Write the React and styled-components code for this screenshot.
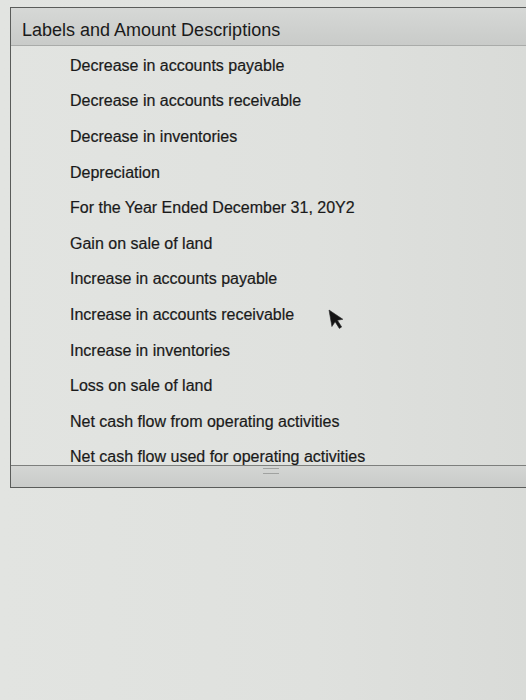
import React from "react";
import styled, { createGlobalStyle } from "styled-components";

const GlobalStyle = createGlobalStyle`
  html, body {
    margin: 0;
    padding: 0;
    background: #dfe1de;
    overflow: hidden;
  }
  body {
    font-family: "Liberation Sans", Arial, sans-serif;
    color: #1a1a1a;
  }
`;

const Page = styled.div`
  position: relative;
  width: 526px;
  height: 700px;
  padding-top: 7px;
  box-sizing: border-box;
  background: linear-gradient(90deg, #e2e4e1 0%, #dfe1de 60%, #d9dbd8 100%);
`;

const Panel = styled.div`
  margin-left: 10px;
  width: 540px;
  border: 1px solid #5a5c5a;
  border-right: none;
  display: flex;
  flex-direction: column;
`;

const Header = styled.div`
  height: 38px;
  box-sizing: border-box;
  display: flex;
  align-items: flex-end;
  padding: 0 0 4px 11px;
  background: linear-gradient(180deg, #d6d8d6 0%, #c9cbc9 100%);
  border-bottom: 1px solid #a9aba9;
  font-size: 18px;
  line-height: 21px;
`;

const List = styled.div`
  padding-top: 1.5px;
  display: flex;
  flex-direction: column;
`;

const Row = styled.div`
  flex: 0 0 35.6px;
  display: flex;
  align-items: center;
  padding-left: 59px;
  font-size: 16px;
  line-height: 19px;
  white-space: nowrap;
  -webkit-text-stroke: 0.2px #1a1a1a;

  &:last-child {
    flex: 0 0 auto;
    align-items: flex-start;
    padding-top: 9.7px;
    padding-bottom: 0.5px;
    line-height: 16px;
  }
`;

const BottomBar = styled.div`
  height: 22px;
  border-top: 1px solid #7d7f7d;
  background: linear-gradient(180deg, #d4d6d4 0%, #c9cbc9 100%);
  display: flex;
  justify-content: flex-start;
  padding-left: 252px;
  padding-top: 2px;
  box-sizing: border-box;
`;

const Grip = styled.div`
  width: 16px;
  height: 4px;
  border-top: 1px solid #a0a2a0;
  border-bottom: 1px solid #a0a2a0;
`;

const Cursor = styled.svg`
  position: absolute;
  left: 328px;
  top: 309px;
  width: 14px;
  height: 23px;
  transform: rotate(-10deg);
  transform-origin: 1px 1px;
`;

const items = [
  "Decrease in accounts payable",
  "Decrease in accounts receivable",
  "Decrease in inventories",
  "Depreciation",
  "For the Year Ended December 31, 20Y2",
  "Gain on sale of land",
  "Increase in accounts payable",
  "Increase in accounts receivable",
  "Increase in inventories",
  "Loss on sale of land",
  "Net cash flow from operating activities",
  "Net cash flow used for operating activities",
];

const App = () => {
  return (
    <>
      <GlobalStyle />
      <Page>
        <Panel>
          <Header>Labels and Amount Descriptions</Header>
          <List>
            {items.map((label) => (
              <Row key={label}>{label}</Row>
            ))}
          </List>
          <BottomBar>
            <Grip />
          </BottomBar>
        </Panel>
        <Cursor viewBox="0 0 14 22" preserveAspectRatio="none">
          <path
            d="M1 1 L1 17 L5 13 L8 20 L10.5 19 L7.5 12 L13 12 Z"
            fill="#141414"
            stroke="#2a2a2a"
            strokeWidth="0.6"
            strokeLinejoin="round"
          />
        </Cursor>
      </Page>
    </>
  );
};

export default App;
